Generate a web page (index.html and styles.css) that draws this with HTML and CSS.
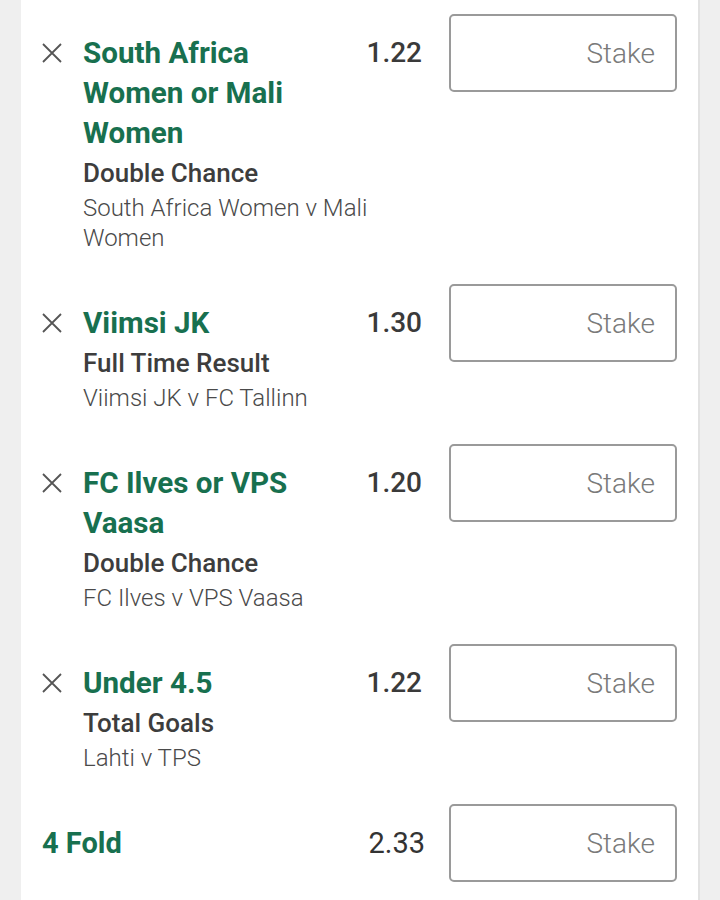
FILE: index.html
```html
<!DOCTYPE html>
<html lang="en">
<head>
<meta charset="utf-8">
<title>Bet slip</title>
<link rel="stylesheet" href="styles.css">
</head>
<body>
<div class="card">
  <div class="leg">
    <svg class="remove" viewBox="0 0 20 20" width="20" height="20"><path d="M1 1 L19 19 M19 1 L1 19" stroke="#555" stroke-width="1.8" fill="none"/></svg>
    <div class="info">
      <div class="head">
        <div class="title">South Africa Women or Mali Women</div>
        <div class="odds">1.22</div>
      </div>
      <div class="market">Double Chance</div>
      <div class="event">South Africa Women v Mali Women</div>
    </div>
    <div class="stake">Stake</div>
  </div>
  <div class="leg">
    <svg class="remove" viewBox="0 0 20 20" width="20" height="20"><path d="M1 1 L19 19 M19 1 L1 19" stroke="#555" stroke-width="1.8" fill="none"/></svg>
    <div class="info">
      <div class="head">
        <div class="title">Viimsi JK</div>
        <div class="odds">1.30</div>
      </div>
      <div class="market">Full Time Result</div>
      <div class="event">Viimsi JK v FC Tallinn</div>
    </div>
    <div class="stake">Stake</div>
  </div>
  <div class="leg">
    <svg class="remove" viewBox="0 0 20 20" width="20" height="20"><path d="M1 1 L19 19 M19 1 L1 19" stroke="#555" stroke-width="1.8" fill="none"/></svg>
    <div class="info">
      <div class="head">
        <div class="title">FC Ilves or VPS Vaasa</div>
        <div class="odds">1.20</div>
      </div>
      <div class="market">Double Chance</div>
      <div class="event">FC Ilves v VPS Vaasa</div>
    </div>
    <div class="stake">Stake</div>
  </div>
  <div class="leg">
    <svg class="remove" viewBox="0 0 20 20" width="20" height="20"><path d="M1 1 L19 19 M19 1 L1 19" stroke="#555" stroke-width="1.8" fill="none"/></svg>
    <div class="info">
      <div class="head">
        <div class="title">Under 4.5</div>
        <div class="odds">1.22</div>
      </div>
      <div class="market">Total Goals</div>
      <div class="event">Lahti v TPS</div>
    </div>
    <div class="stake">Stake</div>
  </div>
  <div class="fold">
    <div class="fold-name">4 Fold</div>
    <div class="fold-odds">2.33</div>
    <div class="stake">Stake</div>
  </div>
</div>
</body>
</html>
```

FILE: styles.css
```css
html, body {
  margin: 0;
  padding: 0;
  background: #efefef;
}
body {
  font-family: Roboto, "Noto Sans", sans-serif;
  height: 900px;
  overflow: hidden;
}
.card {
  margin-left: 21px;
  width: 677px;
  border-right: 2px solid #e2e2e2;
  background: #fff;
  padding-top: 14px;
  min-height: 900px;
}
.leg {
  display: flex;
  align-items: flex-start;
  padding: 0 21px 31px 21px;
}
.remove {
  flex: none;
  margin-top: 29px;
  margin-right: 21px;
}
.info {
  flex: 1;
  min-width: 0;
  padding-top: 19px;
  margin-right: 27px;
}
.head {
  display: flex;
  align-items: flex-start;
}
.title {
  flex: 1;
  min-width: 0;
  font-size: 29.6px;
  font-weight: 700;
  line-height: 40px;
  color: #18704f;
}
.odds {
  flex: none;
  padding-left: 18px;
  font-size: 28px;
  font-weight: 500;
  line-height: 40px;
  color: #3a3a3a;
}
.market {
  font-size: 26px;
  font-weight: 500;
  line-height: 40px;
  color: #3d3d3d;
}
.event {
  font-size: 24px;
  font-weight: 300;
  line-height: 30px;
  color: #4a4a4a;
}
.stake {
  flex: none;
  width: 228px;
  height: 78px;
  box-sizing: border-box;
  border: 2px solid #9a9a9a;
  border-radius: 5px;
  padding-right: 20px;
  display: flex;
  align-items: center;
  justify-content: flex-end;
  font-size: 28px;
  font-weight: 300;
  color: #7a7a7a;
}
.fold {
  display: flex;
  align-items: center;
  padding: 0 21px 0 21px;
}
.fold-name {
  flex: 1;
  font-size: 29px;
  font-weight: 700;
  color: #18704f;
}
.fold-odds {
  flex: none;
  margin-right: 24px;
  font-size: 29px;
  font-weight: 400;
  color: #333;
}
```
